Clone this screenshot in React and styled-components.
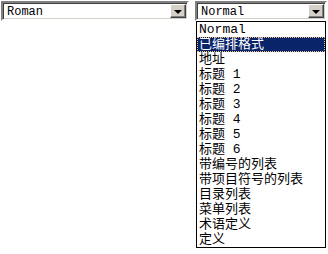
import styled, { createGlobalStyle } from 'styled-components'

const GlobalStyle = createGlobalStyle`
  body {
    margin: 0;
    background: #ffffff;
  }
`

const Page = styled.div`
  display: flex;
  gap: 6px;
  padding: 1px;
  width: 328px;
  height: 254px;
  box-sizing: border-box;
  font-family: "Liberation Mono", "Noto Sans CJK SC", monospace;
`

const SelectWrap = styled.div`
  position: relative;
  width: ${({ width }) => width}px;
  height: 20px;
`

const SelectBox = styled.div`
  display: flex;
  align-items: center;
  height: 100%;
  box-sizing: border-box;
  background: #ffffff;
  border-style: solid;
  border-width: 2px;
  border-color: #808080 #ffffff #ffffff #808080;
  box-shadow: inset 1px 1px 0 #404040, inset -1px -1px 0 #d4d0c8;
  padding: 1px 1px 1px 2px;
`

const Value = styled.span`
  flex: 1;
  font-size: 12px;
  line-height: 14px;
  color: #000000;
  padding-left: 2px;
  padding-top: 1px;
`

const ArrowButton = styled.div`
  width: 16px;
  height: 100%;
  box-sizing: border-box;
  background: #d4d0c8;
  border-style: solid;
  border-width: 1px;
  border-color: #ffffff #404040 #404040 #ffffff;
  box-shadow: inset -1px -1px 0 #808080;
  display: flex;
  align-items: center;
  justify-content: center;
`

const Triangle = styled.div`
  width: 0;
  height: 0;
  border-left: 4px solid transparent;
  border-right: 4px solid transparent;
  border-top: 4px solid #000000;
  margin-top: 1px;
`

const List = styled.ul`
  position: absolute;
  top: 20px;
  left: 1px;
  right: 1px;
  margin: 0;
  padding: 0;
  list-style: none;
  background: #ffffff;
  border: 1px solid #000000;
`

const Option = styled.li`
  height: 15px;
  line-height: 15px;
  font-size: 13px;
  padding-left: 2px;
  box-sizing: border-box;
  white-space: nowrap;
  color: ${({ selected }) => (selected ? '#ffffff' : '#000000')};
  background: ${({ selected }) => (selected ? '#0a246a' : 'transparent')};
  outline: ${({ selected }) => (selected ? '1px dotted #f0c080' : 'none')};
  outline-offset: -1px;
`

const options = [
  'Normal',
  '已编排格式',
  '地址',
  '标题 1',
  '标题 2',
  '标题 3',
  '标题 4',
  '标题 5',
  '标题 6',
  '带编号的列表',
  '带项目符号的列表',
  '目录列表',
  '菜单列表',
  '术语定义',
  '定义',
]

function Select({ width, value, children }) {
  return (
    <SelectWrap width={width}>
      <SelectBox>
        <Value>{value}</Value>
        <ArrowButton>
          <Triangle />
        </ArrowButton>
      </SelectBox>
      {children}
    </SelectWrap>
  )
}

export default function App() {
  return (
    <>
      <GlobalStyle />
      <Page>
        <Select width={188} value="Roman" />
        <Select width={132} value="Normal">
          <List>
            {options.map((o, i) => (
              <Option key={o} selected={i === 1}>{o}</Option>
            ))}
          </List>
        </Select>
      </Page>
    </>
  )
}
